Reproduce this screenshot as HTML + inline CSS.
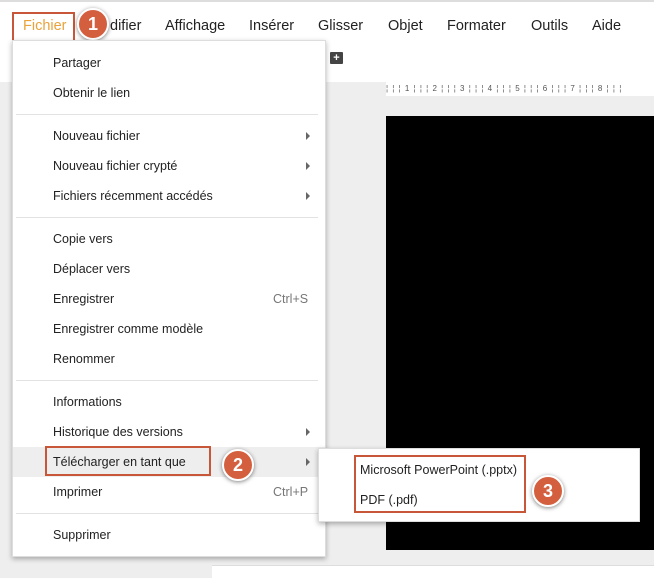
<!DOCTYPE html>
<html><head><meta charset="utf-8"><style>
*{margin:0;padding:0;box-sizing:border-box}
body{width:654px;height:578px;overflow:hidden;background:#fff;font-family:"Liberation Sans",Arial,sans-serif;position:relative;color:#222}
.a{position:absolute}
.mb{font-size:14.5px;color:#222;top:18px}
.it{position:absolute;left:53px;font-size:12.5px;color:#222;white-space:nowrap}
.sep{position:absolute;left:16px;width:302px;height:1px;background:#e2e2e2}
.arr{position:absolute;left:306px;width:0;height:0;border-left:4px solid #666;border-top:4px solid transparent;border-bottom:4px solid transparent}
.sc{position:absolute;right:16px;font-size:12.5px;color:#777}
.badge{position:absolute;width:32px;height:32px;border-radius:50%;background:#d35f3f;border:2px solid #fff;box-shadow:0 1px 4px rgba(0,0,0,.5);color:#fff;font-weight:bold;font-size:18px;text-align:center;line-height:28px}
</style></head><body>
<div class="a" style="left:0;top:0;width:654px;height:2px;background:#ddd"></div>
<div class="a" style="left:0;top:82px;width:654px;height:496px;background:#eeeeee"></div>
<div class="a" style="left:386px;top:82px;width:268px;height:14px;background:#fff;font-size:8px;color:#555;letter-spacing:1px;padding-top:2px;white-space:nowrap">¦ ¦ ¦ 1 ¦ ¦ ¦ 2 ¦ ¦ ¦ 3 ¦ ¦ ¦ 4 ¦ ¦ ¦ 5 ¦ ¦ ¦ 6 ¦ ¦ ¦ 7 ¦ ¦ ¦ 8 ¦ ¦ ¦</div>
<div class="a" style="left:386px;top:116px;width:268px;height:434px;background:#000"></div>
<div class="a" style="left:212px;top:565px;width:442px;height:13px;background:#fff;border-top:1px solid #ddd"></div>
<div class="a" style="left:330px;top:52px;width:13px;height:12px;background:#444;border-radius:1px;color:#fff;font-size:11px;line-height:12px;text-align:center;font-weight:bold">+</div>
<div class="a mb" style="left:23px;color:#e8a33a">Fichier</div>
<div class="a" style="left:12px;top:12px;width:63px;height:30px;border:2px solid #c8573a"></div>
<div class="a mb" style="left:110px">difier</div>
<div class="a mb" style="left:165px">Affichage</div>
<div class="a mb" style="left:249px">Insérer</div>
<div class="a mb" style="left:318px">Glisser</div>
<div class="a mb" style="left:388px">Objet</div>
<div class="a mb" style="left:447px">Formater</div>
<div class="a mb" style="left:531px">Outils</div>
<div class="a mb" style="left:592px">Aide</div>
<div class="badge" style="left:77px;top:8px">1</div>

<div class="a" style="left:12px;top:40px;width:314px;height:517px;background:#fff;box-shadow:0 2px 5px rgba(0,0,0,.3);border:1px solid #ddd"></div>
<div class="it" style="top:56px">Partager</div>
<div class="it" style="top:86px">Obtenir le lien</div>
<div class="sep" style="top:114px"></div>
<div class="it" style="top:129px">Nouveau fichier</div><div class="arr" style="top:132px"></div>
<div class="it" style="top:159px">Nouveau fichier crypté</div><div class="arr" style="top:162px"></div>
<div class="it" style="top:189px">Fichiers récemment accédés</div><div class="arr" style="top:192px"></div>
<div class="sep" style="top:217px"></div>
<div class="it" style="top:232px">Copie vers</div>
<div class="it" style="top:262px">Déplacer vers</div>
<div class="it" style="top:292px">Enregistrer</div><div class="sc" style="top:292px;left:273px">Ctrl+S</div>
<div class="it" style="top:322px">Enregistrer comme modèle</div>
<div class="it" style="top:352px">Renommer</div>
<div class="sep" style="top:380px"></div>
<div class="it" style="top:395px">Informations</div>
<div class="it" style="top:425px">Historique des versions</div><div class="arr" style="top:428px"></div>
<div class="a" style="left:13px;top:447px;width:312px;height:30px;background:#eeeeee"></div>
<div class="it" style="top:455px">Télécharger en tant que</div><div class="arr" style="top:458px"></div>
<div class="a" style="left:45px;top:446px;width:166px;height:30px;border:2px solid #c8573a"></div>
<div class="badge" style="left:222px;top:449px">2</div>
<div class="it" style="top:485px">Imprimer</div><div class="sc" style="top:485px;left:273px">Ctrl+P</div>
<div class="sep" style="top:513px"></div>
<div class="it" style="top:528px">Supprimer</div>

<div class="a" style="left:318px;top:448px;width:322px;height:74px;background:#fff;box-shadow:0 2px 5px rgba(0,0,0,.3);border:1px solid #ddd"></div>
<div class="it" style="left:360px;top:463px">Microsoft PowerPoint (.pptx)</div>
<div class="it" style="left:360px;top:493px">PDF (.pdf)</div>
<div class="a" style="left:354px;top:455px;width:172px;height:58px;border:2px solid #c8573a"></div>
<div class="badge" style="left:532px;top:475px">3</div>
</body></html>
